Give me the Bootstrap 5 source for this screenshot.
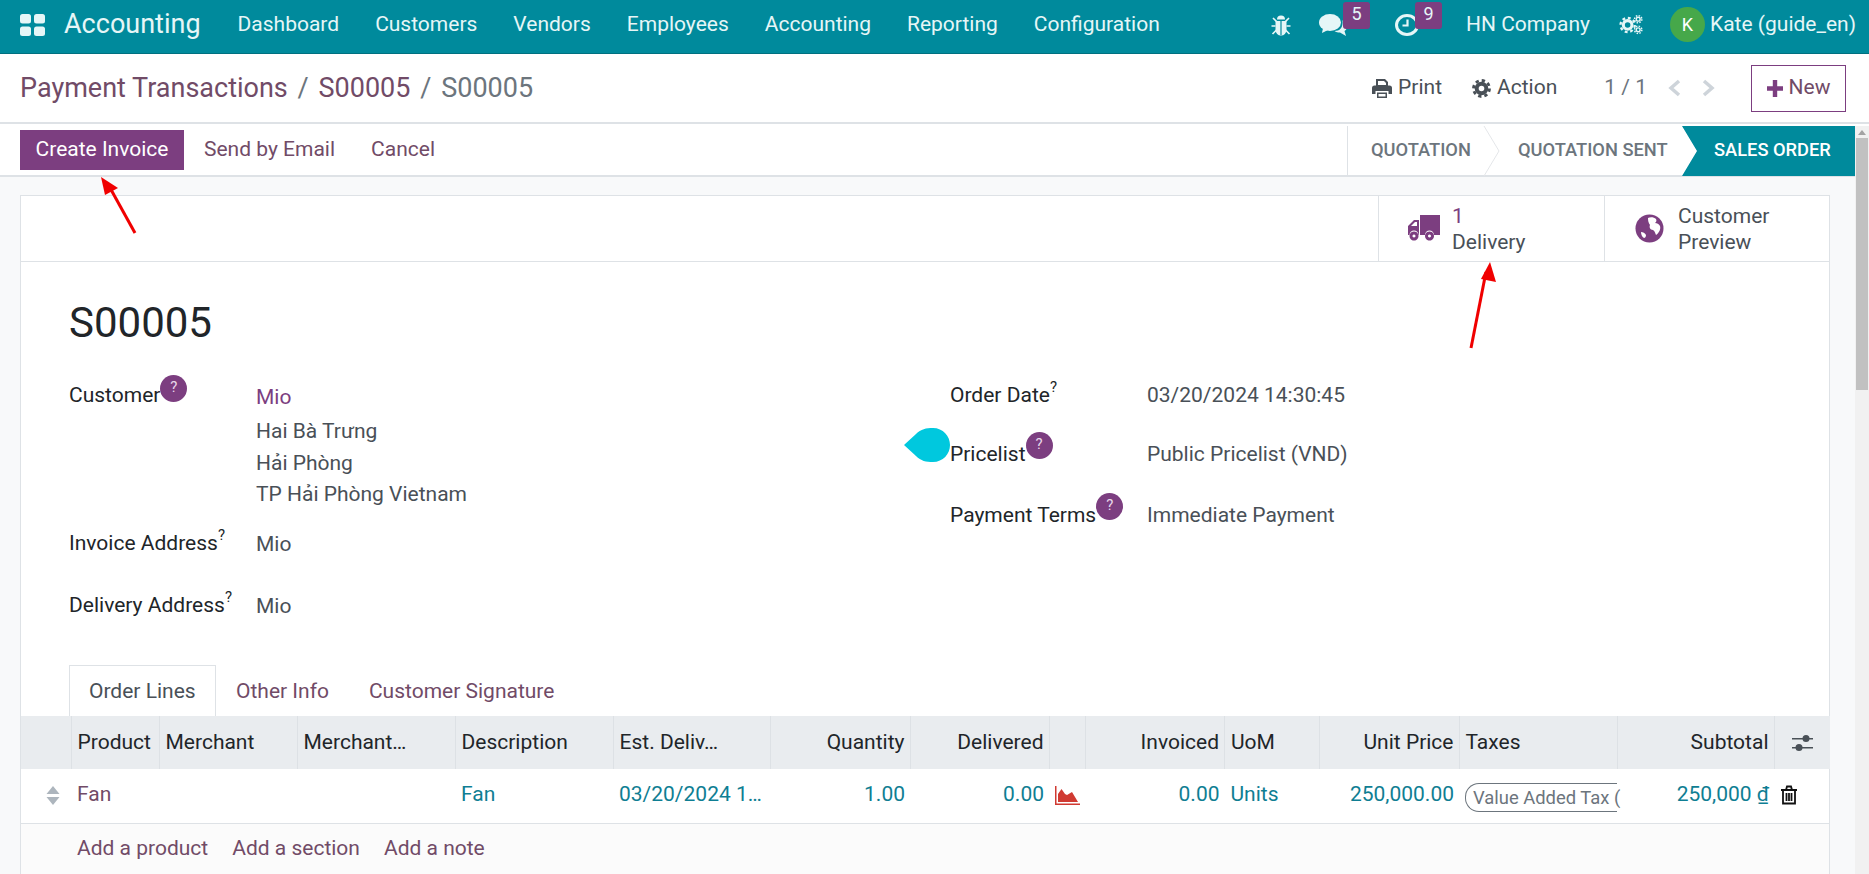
<!DOCTYPE html>
<html lang="en">
<head>
    <meta charset="UTF-8">
    <title>S00005 - Accounting</title>
    <link href="https://cdn.jsdelivr.net/npm/bootstrap@5.3.0/dist/css/bootstrap.min.css" rel="stylesheet">
    <style>
        html, body { height: 874px; overflow: hidden; }
        body { font-family: Roboto, "Liberation Sans", sans-serif; font-size: 21px; color: #212529; background: #fff; position: relative; }
        a { text-decoration: none; color: #714b67; }

        .top-nav { height: 54px; background: #008a9c; padding: 0 13px 5px 20px; color: #e6f6f7; box-shadow: inset 0 -1px 0 #00707f; flex-wrap: nowrap; }
        .top-nav .nav-link { color: #e6f6f7; padding: 0 18px; font-size: 21px; line-height: 49px; }
        .app-name { font-size: 27px; margin: 0 19px; color: #e6f6f7; line-height: 49px; }
        .sys-item { position: relative; display: flex; align-items: center; height: 49px; }
        .nav-badge { position: absolute; top: 2px; width: 27px; height: 27px; background: #7c3e80; color: #e6f6f7; font-size: 18px; line-height: 24px; text-align: center; border-radius: 3px; }
        .avatar { width: 35px; height: 35px; border-radius: 50%; background: #46a84a; color: #fff; font-size: 18px; display: flex; align-items: center; justify-content: center; }
        .bug-slot { margin-right: 28px; }
        .chat-slot { margin-right: 48px; }
        .chat-slot .nav-badge { left: 24px; }
        .clock-slot { margin-right: 47px; }
        .clock-slot .nav-badge { left: 20px; }
        .company { margin-right: 29px; }
        .gear-slot { margin-right: 27px; }
        .user-name { margin-left: 5px; }

        .control-panel { height: 70px; padding: 0 23px 0 20px; border-bottom: 2px solid #dee2e6; }
        .crumbs { font-size: 27px; color: #6c757d; }
        .crumbs .sep { margin: 0 9.8px; color: #6c757d; }
        .cp-action { color: #495057; display: flex; align-items: center; gap: 6px; }
        .action-link { margin-left: 30px; }
        .pager { margin-left: 47px; }
        .pager-left { margin-left: 21px; }
        .pager-right { margin-left: 21px; }
        .btn-new { border: 1px solid #7c3e80; border-radius: 0; color: #714b67; width: 95px; height: 47px; font-size: 21px; padding: 0; margin-left: 36px; display: flex; align-items: center; justify-content: center; gap: 6px; }

        .work { height: 750px; }
        .work-main { width: 1855px; background: #f8f9fa; overflow: hidden; }
        .status-row { height: 53px; background: #fff; border-bottom: 2px solid #dee2e6; padding-left: 20px; }
        .btn-odoo { background: #7c3e80; color: #fff; border: 0; border-radius: 0; height: 40px; width: 164px; font-size: 21px; padding: 0; }
        .btn-link-odoo { color: #714b67; font-size: 21px; padding: 0; border: 0; background: none; }
        .send-btn { margin-left: 20px; }
        .cancel-btn { margin-left: 36px; }
        .status-steps { height: 50px; border-left: 1px solid #dee2e6; align-self: flex-start; margin-top: 2px; }
        .status-steps span { font-size: 18.3px; font-weight: 500; color: #6c757d; line-height: 48px; display: block; }
        .step-sep { flex: none; }
        .step-one { padding-left: 23px; width: 135px; }
        .step-two { padding-left: 17px; width: 181px; }
        .step-active { background: #008a9c; width: 173px; color: #fff !important; padding-left: 32px; clip-path: polygon(0 0, 100% 0, 100% 100%, 0 100%, 15px 50%); }

        .sheet { margin: 18px 25px 0 20px; background: #fff; border: 1px solid #dee2e6; border-bottom: 0; height: 679px; }
        .button-box { height: 66px; border-bottom: 1px solid #dee2e6; flex: none; }
        .stat-btn { width: 226px; border-left: 1px solid #dee2e6; color: #495057; line-height: 26px; padding-left: 29px; gap: 12px; }
        .stat-btn.preview { width: 225px; padding-left: 30px; gap: 14px; }
        .stat-value { color: #7c3e80; }
        .sheet-title { font-size: 42px; line-height: 50px; font-weight: 400; margin: 36px 0 34px 48px; flex: none; }
        .fields { margin: 0 48px; height: 283px; flex: none; }
        .field { display: flex; line-height: 30px; color: #495057; }
        .field label { color: #212529; flex: none; position: relative; }
        .left-col .field label { width: 187px; }
        .right-col { padding-left: 25px; }
        .right-col .field label { width: 197px; }
        .help-dot { display: inline-block; vertical-align: top; width: 27px; height: 27px; margin-top: -7px; border-radius: 50%; background: #7c3e80; color: #e8d8ea; font-size: 15px; line-height: 25px; text-align: center; }
        .field label.customer-label { margin-top: -2px; }
        .customer-label .help-dot { margin-top: -5px; }
        sup.help { font-size: 15px; top: -10px; }
        .addr-line { margin-top: 1.5px; }
        .addr-first { margin-bottom: 4px; }
        .mio-link { color: #7c3e80; }
        .value-low { padding-top: 1px; }
        .invoice-row { margin-top: 19px; }
        .delivery-row { margin-top: 31px; }
        .date-row { margin-top: -2px; }
        .list-row { margin-top: 29px; }
        .terms-row { margin-top: 31px; }

        .form-tabs { margin-left: 48px; height: 51px; border-bottom: 0; flex: none; }
        .form-tabs .nav-link { border-radius: 0; color: #714b67; padding: 0 19px; line-height: 50px; border: 1px solid transparent; margin: 0; }
        .form-tabs .nav-link.active { color: #495057; border-color: #dee2e6; border-bottom-color: #fff; background: #fff; width: 147px; }

        .lines { table-layout: fixed; width: 1809px; margin: 0; flex: none; }
        .lines th, .lines td { padding: 0 5px 0 6px; vertical-align: middle; white-space: nowrap; overflow: hidden; box-shadow: none; }
        .lines thead th { height: 53px; background: #e9ecef; font-weight: 400; color: #212529; border: 0; border-left: 1px solid #dde1e5; }
        .lines thead th:first-child { border-left: 0; }
        .lines tbody td { height: 54px; padding-bottom: 2px; color: #0f7e93; border-bottom: 1px solid #dee2e6; border-top: 0; }
        .lines td.product { color: #714b67; }
        .lines td.handle { padding-right: 11px; }
        .lines td.tax-cell { overflow: visible; }
        .lines th:nth-child(1) { width: 50px; } .lines th:nth-child(2) { width: 88px; }
        .lines th:nth-child(3) { width: 138px; } .lines th:nth-child(4) { width: 158px; }
        .lines th:nth-child(5) { width: 158px; } .lines th:nth-child(6) { width: 157px; }
        .lines th:nth-child(7) { width: 140px; } .lines th:nth-child(8) { width: 139px; }
        .lines th:nth-child(9) { width: 36px; } .lines th:nth-child(10) { width: 139.5px; }
        .lines th:nth-child(11) { width: 94.5px; } .lines th:nth-child(12) { width: 140px; }
        .lines th:nth-child(13) { width: 158.5px; } .lines th:nth-child(14) { width: 156.5px; }
        .lines th:nth-child(15) { width: 56px; }
        .tax-pill { display: block; width: 152px; border: 1px solid #6c757d; border-right: 0; border-radius: 14px 0 0 14px; height: 29px; line-height: 27px; font-size: 18.4px; color: #6c757d; padding-left: 7px; margin-top: 6px; white-space: nowrap; }
        .currency { text-decoration: underline; }
        .add-links { gap: 24px; padding-left: 56px; background: #fbfbfb; padding-top: 9px; }
        .add-links a { line-height: 30px; height: 30px; }

        .fake-scroll { width: 14px; background: #f1f1f1; margin-top: 2px; }
        .fake-scroll i { display: block; width: 0; height: 0; margin: 4px auto 3px; border: 4px solid transparent; border-top: 0; border-bottom: 5px solid #a3a3a3; }
        .fake-scroll b { display: block; height: 252px; margin: 0 1px; background: #c1c1c1; }

        .overlay { position: absolute; pointer-events: none; }
        .arrow-one { left: 95px; top: 172px; }
        .arrow-two { left: 1465px; top: 258px; }
        .cursor-drop { left: 904px; top: 428px; }
    </style>
</head>
<body>
    <nav class="navbar top-nav d-flex align-items-center">
        <svg width="25" height="22" viewBox="0 0 25 22" fill="#e6f6f7"><rect width="11" height="9.5" rx="2.5"/><rect x="14" width="11" height="9.5" rx="2.5"/><rect y="12.5" width="11" height="9.5" rx="2.5"/><rect x="14" y="12.5" width="11" height="9.5" rx="2.5"/></svg>
        <span class="app-name">Accounting</span>
        <ul class="nav flex-nowrap">
            <li class="nav-item"><a class="nav-link" href="#">Dashboard</a></li>
            <li class="nav-item"><a class="nav-link" href="#">Customers</a></li>
            <li class="nav-item"><a class="nav-link" href="#">Vendors</a></li>
            <li class="nav-item"><a class="nav-link" href="#">Employees</a></li>
            <li class="nav-item"><a class="nav-link" href="#">Accounting</a></li>
            <li class="nav-item"><a class="nav-link" href="#">Reporting</a></li>
            <li class="nav-item"><a class="nav-link" href="#">Configuration</a></li>
        </ul>
        <div class="d-flex align-items-center ms-auto">
            <div class="sys-item bug-slot">
                <svg width="20" height="22" viewBox="0 0 20 22" fill="#e6f6f7"><path d="M6 5.5a4 4 0 0 1 8 0z"/><path d="M4.500 7h11v9a5.500 5.500 0 0 1-11 0z"/><path d="M2 4l3.500 3.500M18 4l-3.500 3.500M.5 12h4M15.500 12h4M1.500 20l4-4M18.500 20l-4-4" stroke="#e6f6f7" stroke-width="1.7" fill="none"/><path d="M10 7v14" stroke="#008a9c" stroke-width="1.2"/></svg>
            </div>
            <div class="sys-item chat-slot">
                <svg width="28" height="22" viewBox="0 0 28 22" fill="#e6f6f7"><ellipse cx="11" cy="8.5" rx="11" ry="8.500"/><path d="M4 14l-1 5 6-3z"/><path d="M23 6c3 1.500 5 4 5 6.500 0 2-1 3.500-2.500 4.500l1.500 5-6-3.500c-2 0-4-.5-5.500-1.500 5 0 9-3 8-11z"/></svg>
                <span class="nav-badge">5</span>
            </div>
            <div class="sys-item clock-slot">
                <svg width="24" height="22" viewBox="0 0 24 22" fill="none" stroke="#e6f6f7"><ellipse cx="12" cy="11" rx="10.5" ry="9.5" stroke-width="3"/><path d="M12.500 5.500v6h-5" stroke-width="2.2"/></svg>
                <span class="nav-badge">9</span>
            </div>
            <span class="company">HN Company</span>
            <div class="sys-item gear-slot">
                <svg width="24" height="21" viewBox="0 0 25 21" fill="none" stroke="#e6f6f7"><circle cx="9" cy="11" r="4.5" stroke-width="3.2"/><circle cx="9" cy="11" r="7.4" stroke-width="2.4" stroke-dasharray="3 2.81"/><circle cx="20" cy="5" r="2" stroke-width="1.5"/><circle cx="20" cy="5" r="3.8" stroke-width="1.5" stroke-dasharray="1.6 1.38"/><circle cx="20" cy="16" r="2" stroke-width="1.5"/><circle cx="20" cy="16" r="3.8" stroke-width="1.5" stroke-dasharray="1.6 1.38"/></svg>
            </div>
            <span class="avatar">K</span>
            <span class="user-name">Kate (guide_en)</span>
        </div>
    </nav>

    <div class="control-panel d-flex align-items-center">
        <div class="crumbs">
            <a href="#">Payment Transactions</a><span class="sep">/</span><a href="#">S00005</a><span class="sep">/</span><span>S00005</span>
        </div>
        <div class="d-flex align-items-center ms-auto">
            <a class="cp-action" href="#">
                <svg width="20" height="19" viewBox="0 0 20 19" fill="#495057"><path d="M4 0h9l3 3v4H4z M6 2v4h8V4l-2-2z" fill-rule="evenodd"/><path d="M2.500 6.500h15a2.500 2.500 0 0 1 2.500 2.500v6h-3.500v-3h-13v3H0V9a2.500 2.500 0 0 1 2.500-2.500z"/><path d="M5 13.500h10V19H5z M6.500 15v2.500h7V15z" fill-rule="evenodd"/></svg>
                Print
            </a>
            <a class="cp-action action-link" href="#">
                <svg width="19" height="19" viewBox="0 0 19 19" fill="none" stroke="#495057"><circle cx="9.5" cy="9.5" r="4.8" stroke-width="4"/><circle cx="9.5" cy="9.5" r="8" stroke-width="2.8" stroke-dasharray="3.3 2.98"/></svg>
                Action
            </a>
            <span class="pager text-secondary">1 / 1</span>
            <svg class="pager-left" width="13" height="18" viewBox="0 0 13 18" fill="none" stroke="#ced4da" stroke-width="3.5"><path d="M11 2L3 9l8 7"/></svg>
            <svg class="pager-right" width="13" height="18" viewBox="0 0 13 18" fill="none" stroke="#ced4da" stroke-width="3.5"><path d="M2 2l8 7-8 7"/></svg>
            <button class="btn btn-new" type="button">
                <svg width="16" height="17" viewBox="0 0 16 17" fill="#7c3e80"><path d="M5.800 0h4.400v6.300H16v4.400h-5.800V17H5.800v-6.300H0V6.300h5.800z"/></svg>
                New
            </button>
        </div>
    </div>

    <div class="work d-flex">
        <div class="work-main">
            <div class="status-row d-flex align-items-center">
                <button class="btn btn-odoo" type="button">Create Invoice</button>
                <button class="btn btn-link-odoo send-btn" type="button">Send by Email</button>
                <button class="btn btn-link-odoo cancel-btn" type="button">Cancel</button>
                <div class="status-steps d-flex ms-auto">
                    <span class="step-one">QUOTATION</span>
                    <svg width="18" height="50" viewBox="0 0 18 50" fill="none" stroke="#e4e6e9" class="step-sep"><path d="M1 0l15 25L1 50"/></svg>
                    <span class="step-two">QUOTATION SENT</span>
                    <span class="step-active">SALES ORDER</span>
                </div>
            </div>

            <div class="sheet d-flex flex-column">
                <div class="button-box d-flex justify-content-end">
                    <a class="stat-btn d-flex align-items-center" href="#">
                        <svg width="32" height="27" viewBox="0 0 32 27" fill="#7c3e80"><path d="M12 0h20v20H26a4.500 4.500 0 0 0-9 0h-5z"/><path d="M11 5H6L0 11v9h1.500a4.500 4.500 0 0 1 9 0H11zM3 11l4-4h2v4z" fill-rule="evenodd"/><path d="M6 16.500a4.500 4.500 0 1 0 .01 0zm0 3a1.500 1.500 0 1 1-.01 0z M21.500 16.500a4.500 4.500 0 1 0 .01 0zm0 3a1.500 1.500 0 1 1-.01 0z" fill-rule="evenodd"/></svg>
                        <div><div class="stat-value">1</div><div>Delivery</div></div>
                    </a>
                    <a class="stat-btn preview d-flex align-items-center" href="#">
                        <svg width="29" height="29" viewBox="0 0 29 29"><circle cx="14.5" cy="14.5" r="14" fill="#7c3e80"/><path d="M13 4c2-1 6-1 8 1 1 2 0 3-1 4 2 0 4 1 5 3 1 3-1 7-4 9-1-2-1-4-3-5-3 0-4-3-3-5-1-2-2-3-2-7z M6 18c2 0 4 1 5 3 0 2-1 3-2 3-2-1-3-4-3-6z" fill="#fff"/></svg>
                        <div><div>Customer</div><div>Preview</div></div>
                    </a>
                </div>

                <h1 class="sheet-title">S00005</h1>

                <div class="row g-0 fields">
                    <div class="col-6 left-col">
                        <div class="field">
                            <label class="customer-label">Customer<span class="help-dot">?</span></label>
                            <div>
                                <div class="addr-first"><a class="mio-link" href="#">Mio</a></div>
                                <div>Hai Bà Trưng</div>
                                <div class="addr-line">Hải Phòng</div>
                                <div class="addr-line">TP Hải Phòng Vietnam</div>
                            </div>
                        </div>
                        <div class="field invoice-row"><label>Invoice Address<sup class="help">?</sup></label><div class="value-low">Mio</div></div>
                        <div class="field delivery-row"><label>Delivery Address<sup class="help">?</sup></label><div class="value-low">Mio</div></div>
                    </div>
                    <div class="col-6 right-col">
                        <div class="field date-row"><label>Order Date<sup class="help">?</sup></label><div>03/20/2024 14:30:45</div></div>
                        <div class="field list-row"><label>Pricelist<span class="help-dot">?</span></label><div>Public Pricelist (VND)</div></div>
                        <div class="field terms-row"><label>Payment Terms<span class="help-dot">?</span></label><div>Immediate Payment</div></div>
                    </div>
                </div>

                <ul class="nav nav-tabs form-tabs">
                    <li class="nav-item"><a class="nav-link active" href="#">Order Lines</a></li>
                    <li class="nav-item"><a class="nav-link" href="#">Other Info</a></li>
                    <li class="nav-item"><a class="nav-link" href="#">Customer Signature</a></li>
                </ul>

                <table class="table lines">
                    <thead>
                        <tr>
                            <th></th><th>Product</th><th>Merchant</th><th>Merchant…</th><th>Description</th><th>Est. Deliv…</th>
                            <th class="text-end">Quantity</th><th class="text-end">Delivered</th><th></th>
                            <th class="text-end">Invoiced</th><th>UoM</th><th class="text-end">Unit Price</th><th>Taxes</th>
                            <th class="text-end">Subtotal</th>
                            <th class="text-center">
                                <svg width="21" height="20" viewBox="0 0 21 20" fill="#495057"><path d="M0 5h21v1.500H0zM0 14h21v1.500H0z"/><circle cx="14" cy="5.5" r="3.500"/><circle cx="7" cy="14.5" r="3.500"/></svg>
                            </th>
                        </tr>
                    </thead>
                    <tbody>
                        <tr>
                            <td class="text-end handle">
                                <svg width="14" height="19" viewBox="0 0 14 19" fill="#adb5bd"><path d="M7 0l6.500 8H.5zM7 19l6.500-8H.5z"/></svg>
                            </td>
                            <td class="product">Fan</td><td></td><td></td><td>Fan</td><td>03/20/2024 1…</td>
                            <td class="text-end">1.00</td><td class="text-end">0.00</td>
                            <td>
                                <svg width="25" height="19" viewBox="0 0 25 19" fill="#d03a32"><path d="M0 0h1.500v17.500H25V19H0z"/><path d="M3 16V8l3.500-5L10 8l2 1 5-3 6 10z"/></svg>
                            </td>
                            <td class="text-end">0.00</td><td>Units</td><td class="text-end">250,000.00</td>
                            <td class="tax-cell"><span class="tax-pill">Value Added Tax (</span></td>
                            <td class="text-end">250,000 <span class="currency">₫</span></td>
                            <td>
                                <svg width="18" height="20" viewBox="0 0 18 20" fill="none" stroke="#111" stroke-width="1.8"><path d="M1 5h16M6 5l1-3.500h4L12 5M3 5v13.500h12V5"/><path d="M6.500 8v8M9 8v8M11.500 8v8"/></svg>
                            </td>
                        </tr>
                    </tbody>
                </table>
                <div class="add-links d-flex flex-grow-1">
                    <a href="#">Add a product</a><a href="#">Add a section</a><a href="#">Add a note</a>
                </div>
            </div>
        </div>
        <div class="fake-scroll"><i></i><b></b></div>
    </div>

    <svg class="overlay arrow-one" width="45" height="65" viewBox="0 0 45 65"><path d="M40 61L14 14" stroke="#f00000" stroke-width="3" fill="none"/><path d="M6 5l17 11-13 7z" fill="#f00000"/></svg>
    <svg class="overlay arrow-two" width="35" height="95" viewBox="0 0 35 95"><path d="M6 90L21 14" stroke="#f00000" stroke-width="3" fill="none"/><path d="M25 4l6 20-15-3z" fill="#f00000"/></svg>
    <svg class="overlay cursor-drop" width="46" height="34" viewBox="0 0 46 34"><path d="M0 17L12 6C17 1 22 0 29 0c10 0 17 8 17 17s-7 17-17 17c-7 0-12-1-17-6z" fill="#00c8de"/></svg>
</body>
</html>
